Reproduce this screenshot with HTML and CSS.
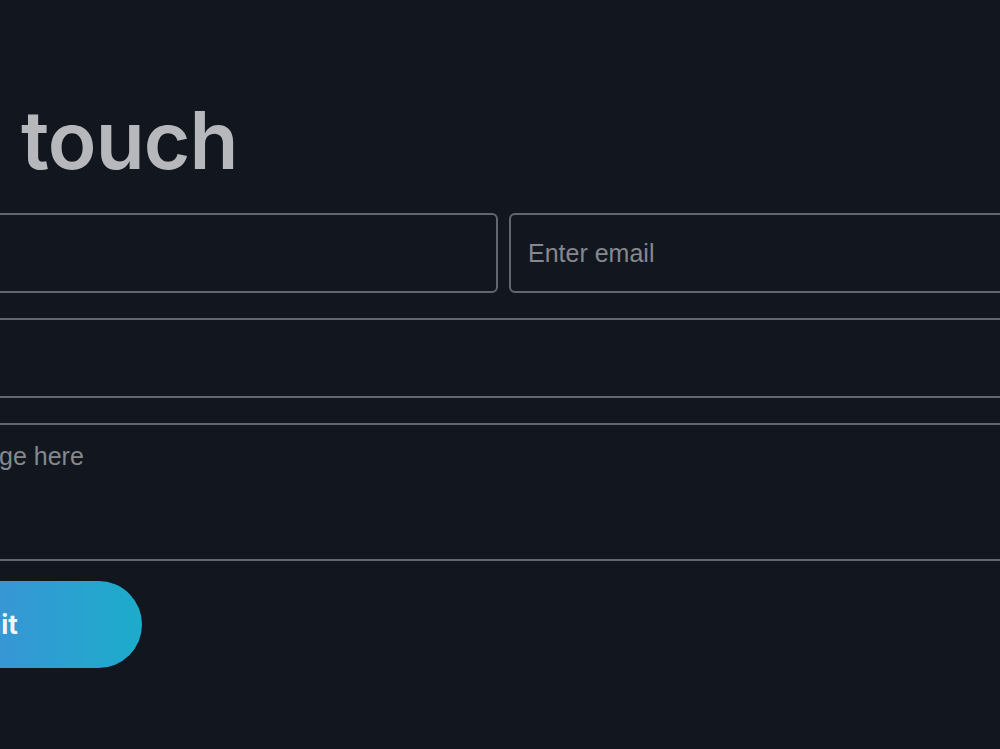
FILE: index.html
```html
<!DOCTYPE html>
<html lang="en">
<head>
<meta charset="utf-8">
<title>Contact</title>
<link rel="stylesheet" href="styles.css">
</head>
<body>
<section class="contact">
  <h1 class="contact-title">Get in touch</h1>
  <form class="contact-form">
    <div class="row two">
      <input class="field" type="text" placeholder="Enter name">
      <input class="field" type="email" placeholder="Enter email">
    </div>
    <input class="field" type="text" placeholder="Enter subject">
    <textarea class="field area" placeholder="Write your message here"></textarea>
    <button class="submit" type="button">Submit</button>
  </form>
</section>
</body>
</html>
```

FILE: styles.css
```css
html, body {
  margin: 0;
  background: #12171f;
  overflow: hidden;
}

body {
  font-family: "Liberation Sans", Arial, sans-serif;
}

.contact {
  width: 1455px;
  margin-left: -224px;
  padding-top: 92px;
}

.contact-title {
  margin: 0 0 25px;
  padding-left: 5px;
  font-family: Inter, "Noto Sans", sans-serif;
  font-weight: 600;
  font-size: 80px;
  line-height: 96px;
  letter-spacing: -0.8px;
  color: #b7b8bc;
}

.contact-form {
  display: flex;
  flex-direction: column;
  gap: 25px;
}

.row.two {
  display: grid;
  grid-template-columns: 1fr 1fr;
  gap: 11px;
}

.field {
  box-sizing: border-box;
  height: 80px;
  width: 100%;
  padding: 0 17px;
  border: 2px solid #62666e;
  border-radius: 6px;
  background: #12171f;
  color: #c9cacd;
  font-family: "Liberation Sans", Arial, sans-serif;
  font-size: 25px;
  outline: none;
}

.field::placeholder {
  color: #85888e;
}

.area {
  display: block;
  height: 138px;
  padding: 17px 27px 0;
  resize: none;
}

.submit {
  align-self: flex-start;
  margin-left: 28px;
  margin-top: -5px;
  height: 87px;
  padding: 0 124px;
  border: 0;
  border-radius: 44px;
  background: linear-gradient(90deg, #5a7ee6 0%, #3c92d7 50%, #1caccb 100%);
  color: #f2f6fb;
  font-family: Inter, "Noto Sans", sans-serif;
  font-weight: 700;
  font-size: 26px;
}
```
